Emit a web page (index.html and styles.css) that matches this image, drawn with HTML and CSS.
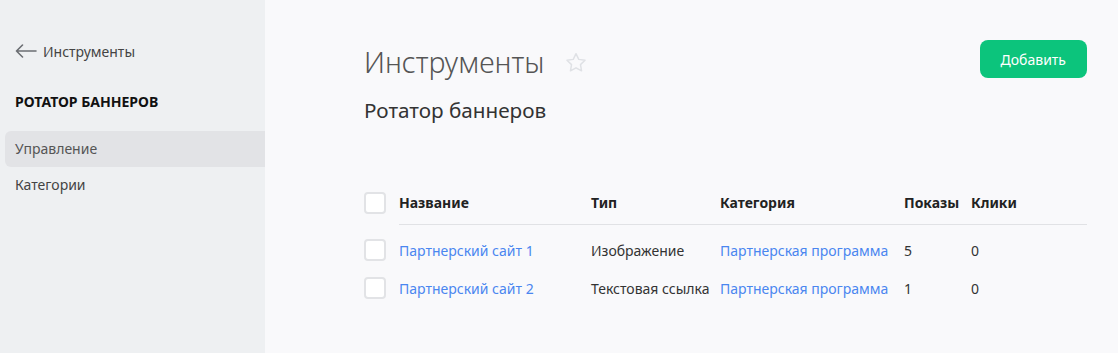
FILE: index.html
```html
<!DOCTYPE html>
<html lang="ru">
<head>
  <meta charset="UTF-8">
  <meta name="viewport" content="width=device-width, initial-scale=1.0">
  <title>Ротатор баннеров</title>
  <link rel="stylesheet" href="styles.css">
</head>
<body>
  <div class="layout">
    <aside class="sidebar">
      <a class="back-link" href="#">
        <svg width="22" height="14" viewBox="0 0 22 14" fill="none" stroke="#6b6e73" stroke-width="1.6" stroke-linecap="round" stroke-linejoin="round">
          <path d="M21 7H1.5M7.5 1L1.5 7l6 6"/>
        </svg>
        Инструменты
      </a>
      <div class="sidebar-title">РОТАТОР БАННЕРОВ</div>
      <nav class="side-menu">
        <a class="side-item active" href="#">Управление</a>
        <a class="side-item" href="#">Категории</a>
      </nav>
    </aside>

    <main class="content">
      <div class="page-head">
        <div>
          <h1>Инструменты
            <svg class="star" width="22" height="21" viewBox="0 0 24 23" fill="none" stroke="#dfe1e5" stroke-width="1.6" stroke-linejoin="round">
              <path d="M12 1.8l3 6.3 6.9.9-5 4.8 1.2 6.8L12 17.3l-6.1 3.3 1.2-6.8-5-4.8 6.9-.9z"/>
            </svg>
          </h1>
          <h2>Ротатор баннеров</h2>
        </div>
        <button class="btn-add" type="button">Добавить</button>
      </div>

      <div class="grid">
        <div class="row head">
          <span class="check"></span>
          <div class="cells">
            <span>Название</span>
            <span>Тип</span>
            <span>Категория</span>
            <span>Показы</span>
            <span>Клики</span>
          </div>
        </div>
        <div class="row">
          <span class="check"></span>
          <div class="cells">
            <a href="#">Партнерский сайт 1</a>
            <span>Изображение</span>
            <a href="#">Партнерская программа</a>
            <span>5</span>
            <span>0</span>
          </div>
        </div>
        <div class="row">
          <span class="check"></span>
          <div class="cells">
            <a href="#">Партнерский сайт 2</a>
            <span>Текстовая ссылка</span>
            <a href="#">Партнерская программа</a>
            <span>1</span>
            <span>0</span>
          </div>
        </div>
      </div>
    </main>
  </div>
</body>
</html>
```

FILE: styles.css
```css
* {
  box-sizing: border-box;
}

body {
  margin: 0;
  font-family: "Noto Sans", "Open Sans", sans-serif;
  font-size: 14px;
  color: #333;
  background-color: #f9f9fb;
}

a {
  text-decoration: none;
}

.layout {
  display: flex;
  min-height: 353px;
}

/* боковая панель */
.sidebar {
  width: 265px;
  flex-shrink: 0;
  background-color: #eef0f2;
  padding: 41px 0 0 5px;
}

.back-link {
  display: flex;
  align-items: center;
  gap: 6px;
  padding-left: 10px;
  color: #444;
  font-size: 14px;
  height: 20px;
}

.sidebar-title {
  margin: 31px 0 0 10px;
  font-weight: bold;
  font-size: 14px;
  color: #111;
  height: 20px;
}

.side-menu {
  margin-top: 19px;
  display: flex;
  flex-direction: column;
}

.side-item {
  display: block;
  height: 36px;
  line-height: 36px;
  padding-left: 10px;
  color: #444;
  border-radius: 6px 0 0 6px;
}

.side-item.active {
  background-color: #e2e3e6;
  color: #555;
}

/* основная часть */
.content {
  flex: 1;
  padding: 40px 31px 0 99px;
}

.page-head {
  display: flex;
  justify-content: space-between;
  align-items: flex-start;
}

.page-head h1 {
  margin: 4px 0 0;
  font-size: 28.5px;
  font-weight: 300;
  color: #555;
  display: flex;
  align-items: center;
  gap: 21px;
  line-height: 36px;
}

.page-head h2 {
  margin: 17px 0 0;
  font-size: 20.7px;
  font-weight: normal;
  color: #333;
  line-height: 26px;
}

.btn-add {
  height: 38px;
  padding: 0 21px;
  font-family: inherit;
  font-size: 14px;
  color: #fff;
  background-color: #0cc47c;
  border: none;
  border-radius: 8px;
  cursor: pointer;
}

.grid {
  margin-top: 69px;
}

.row {
  display: flex;
  align-items: center;
}

.check {
  width: 22px;
  height: 22px;
  flex-shrink: 0;
  border: 2px solid #e2e3e6;
  border-radius: 4px;
  background-color: #fff;
  margin-right: 13px;
}

.cells {
  flex: 1;
  display: grid;
  grid-template-columns: 192px 129px 184px 67px 1fr;
  align-items: center;
  height: 38px;
}

.cells a {
  color: #4a86f0;
}

/* шапка таблицы */
.row.head {
  align-items: flex-start;
  margin-bottom: 6px;
}

.row.head .cells {
  height: 33px;
  line-height: 22px;
  align-items: start;
  font-weight: bold;
  color: #222;
  border-bottom: 1px solid #e1e2e5;
}
```
